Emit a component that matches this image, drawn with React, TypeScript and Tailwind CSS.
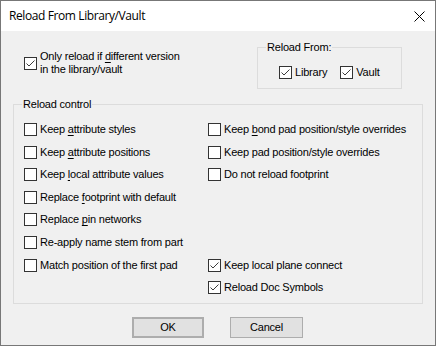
import React from "react";

/**
 * Reload From Library/Vault dialog
 */

const labelFont = "font-['Liberation_Sans',Arial,sans-serif] text-[11px] tracking-[-0.2px] text-[#000]";

function Mnemonic({ text, at }: { text: string; at?: number }) {
    if (at === undefined) return <>{text}</>;
    return (
        <>
            {text.slice(0, at)}
            <span className="underline underline-offset-[2px]">{text[at]}</span>
            {text.slice(at + 1)}
        </>
    );
}

function Box({ checked }: { checked?: boolean }) {
    return (
        <span className="flex h-[13px] w-[13px] shrink-0 items-center justify-center border border-[#333333] bg-white">
            {checked && (
                <svg width="11" height="11" viewBox="0 0 11 11">
                    <path d="M1.5 5.5 L4 8 L9.5 2.5" fill="none" stroke="#3c3c3c" strokeWidth="1" />
                </svg>
            )}
        </span>
    );
}

function Check({ label, at, checked }: { label: string; at?: number; checked?: boolean }) {
    return (
        <div className="flex items-center gap-[3px]">
            <Box checked={checked} />
            <span className={`${labelFont} leading-[13px] whitespace-nowrap`}>
                <Mnemonic text={label} at={at} />
            </span>
        </div>
    );
}

function GroupBox({ title, className, children }: { title: string; className: string; children?: React.ReactNode }) {
    return (
        <div className={`relative border border-[#dcdcdc] ${className}`}>
            <span className={`absolute top-[-8px] left-[8px] bg-[#f0f0f0] px-[1px] ${labelFont} leading-[14px]`}>{title}</span>
            {children}
        </div>
    );
}

export default function App() {
    return (
        <div className="flex h-[346px] w-[436px] flex-col border border-[#777777] bg-[#f0f0f0]">
            {/* Title bar */}
            <div className="flex h-[30px] shrink-0 items-center justify-between bg-white pl-[8px] pr-[10px]">
                <span className="font-['Open_Sans',sans-serif] text-[12px] tracking-[-0.4px] text-black">Reload From Library/Vault</span>
                <svg width="11" height="11" viewBox="0 0 11 11">
                    <path d="M0.5 0.5 L10.5 10.5 M10.5 0.5 L0.5 10.5" stroke="#000" strokeWidth="1" />
                </svg>
            </div>

            <div className="flex flex-col pt-[16px]">
                {/* Top row */}
                <div className="flex items-start">
                    <div className="mt-[3px] ml-[23px] flex items-center gap-[3px]">
                        <Box checked />
                        <span className={`${labelFont} leading-[13px]`}>
                            Only reload if <Mnemonic text="different" at={0} /> version
                            <br />
                            in the library/vault
                        </span>
                    </div>
                    <GroupBox title="Reload From:" className="mr-[33px] ml-auto h-[42px] w-[145px]">
                        <div className="flex items-center gap-[13px] pt-[18px] pl-[21px]">
                            <Check label="Library" checked />
                            <Check label="Vault" checked />
                        </div>
                    </GroupBox>
                </div>

                {/* Reload control */}
                <GroupBox title="Reload control" className="mt-[15px] ml-[12px] h-[200px] w-[410px]">
                    <div className="grid grid-cols-[184px_1fr] grid-rows-[23px_22px_23px_22px_23px_23px_22px_22px] items-start pt-[18px] pl-[10px]">
                        <Check label="Keep attribute styles" at={5} />
                        <Check label="Keep bond pad position/style overrides" at={5} />
                        <Check label="Keep attribute positions" at={5} />
                        <Check label="Keep pad position/style overrides" />
                        <Check label="Keep local attribute values" at={5} />
                        <Check label="Do not reload footprint" />
                        <Check label="Replace footprint with default" at={8} />
                        <div />
                        <Check label="Replace pin networks" at={8} />
                        <div />
                        <Check label="Re-apply name stem from part" />
                        <div />
                        <Check label="Match position of the first pad" />
                        <Check label="Keep local plane connect" checked />
                        <div />
                        <Check label="Reload Doc Symbols" checked />
                    </div>
                </GroupBox>

                {/* Buttons */}
                <div className="mt-[13px] ml-[131px] flex gap-[26px]">
                    <button className={`h-[21px] w-[72px] border-2 border-[#adadad] bg-[#e1e1e1] ${labelFont}`}>OK</button>
                    <button className={`h-[21px] w-[73px] border border-[#adadad] bg-[#e1e1e1] ${labelFont}`}>Cancel</button>
                </div>
            </div>
        </div>
    );
}
